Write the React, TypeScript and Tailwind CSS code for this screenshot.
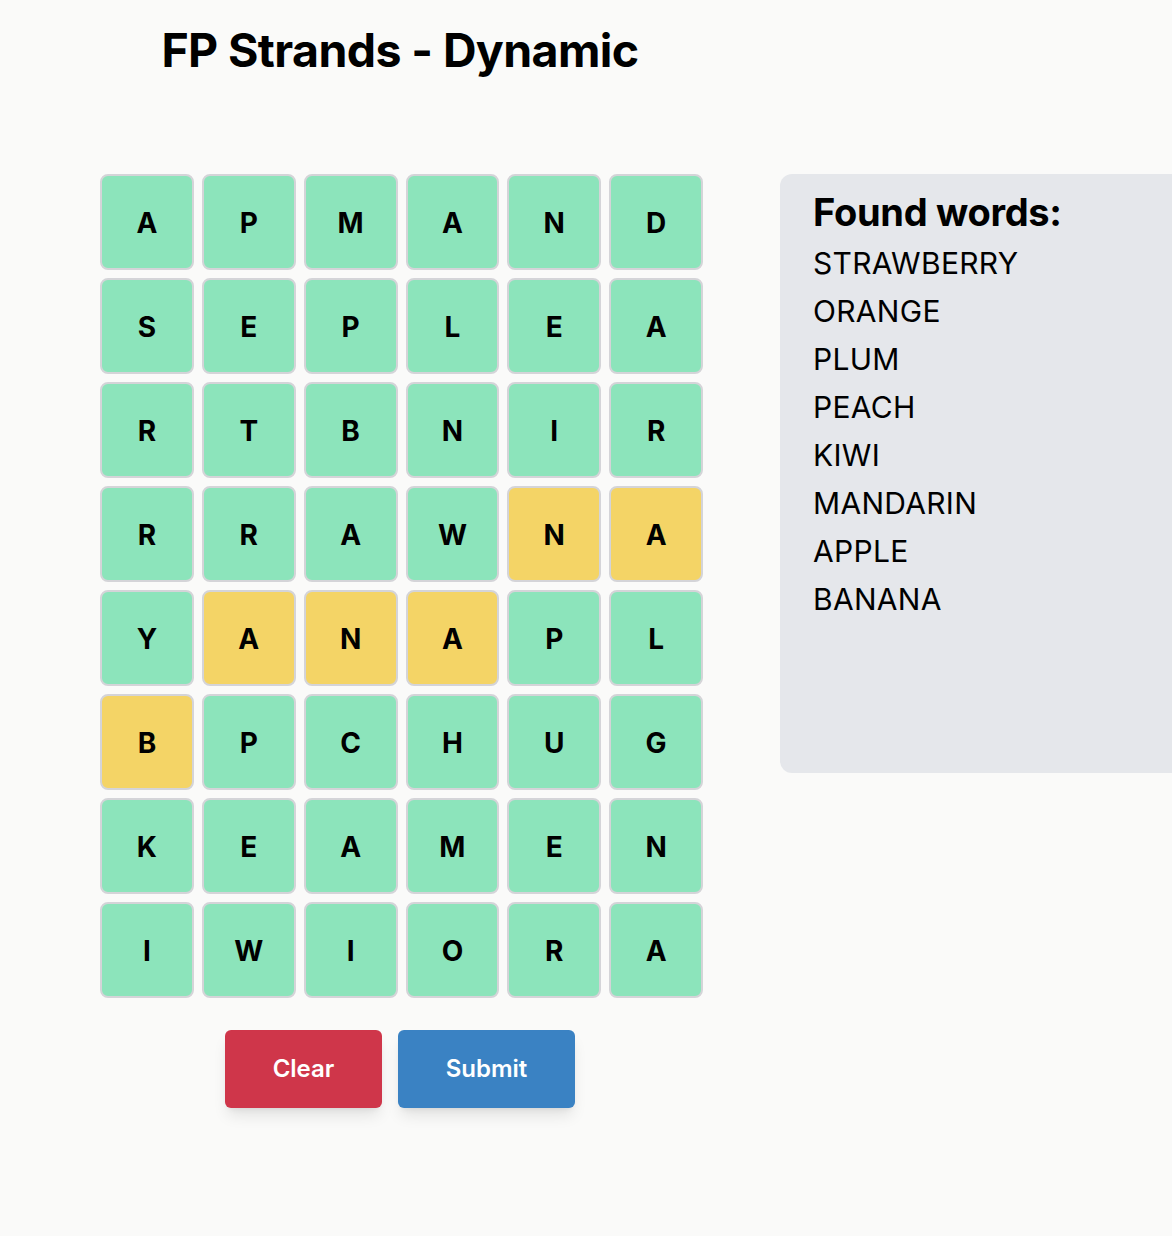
import React from "react";

const grid = [
  "APMAND",
  "SEPLEA",
  "RTBNIR",
  "RRAWNA",
  "YANAPL",
  "BPCHUG",
  "KEAMEN",
  "IWIORA",
];

// cells that are part of the current selection (row, col)
const selected = new Set(["3-4", "3-5", "4-1", "4-2", "4-3", "5-0"]);

const foundWords = ["STRAWBERRY", "ORANGE", "PLUM", "PEACH", "KIWI", "MANDARIN", "APPLE", "BANANA"];

export default function App() {
  return (
    <div className="min-h-screen w-full overflow-hidden bg-[#fafaf9] font-['Inter',sans-serif] text-black">
      <div className="ml-[100px] w-[600px] pt-[27px] text-center">
        <h1 className="text-[46.5px] leading-none font-bold tracking-[-0.6px]">FP Strands - Dynamic</h1>
      </div>

      <div className="mt-[100px] flex items-start">
        {/* Board */}
        <div className="ml-[100px] flex w-[603px] flex-col items-center">
          <div className="grid w-[603px] grid-cols-6 gap-x-2 gap-y-2">
            {grid.map((row, r) =>
              row.split("").map((letter, c) => {
                const isSel = selected.has(`${r}-${c}`);
                return (
                  <button
                    key={`${r}-${c}`}
                    className={`flex h-24 items-center justify-center rounded-lg border-2 border-[#d4d4d8] pt-[2px] text-[28px] font-bold ${
                      isSel ? "bg-[#f4d466]" : "bg-[#8ce4bb]"
                    }`}
                  >
                    {letter}
                  </button>
                );
              })
            )}
          </div>

          <div className="mt-[32px] flex gap-4 pr-[3px]">
            <button className="h-[78px] w-[157px] rounded-md bg-[#cf364a] text-2xl font-semibold text-white shadow-lg">
              Clear
            </button>
            <button className="h-[78px] w-[177px] rounded-md bg-[#3a82c3] text-2xl font-semibold text-white shadow-lg">
              Submit
            </button>
          </div>
        </div>

        {/* Found words */}
        <div className="ml-[77px] h-[599px] w-[420px] shrink-0 rounded-xl bg-[#e5e7eb] px-[33px] pt-[14px]">
          <h2 className="text-[38px] leading-[48px] font-bold tracking-[-0.3px]">Found words:</h2>
          <ul className="mt-[3px]">
            {foundWords.map((w) => (
              <li key={w} className="text-[30px] leading-[48px] tracking-[0.3px]">
                {w}
              </li>
            ))}
          </ul>
        </div>
      </div>
    </div>
  );
}
